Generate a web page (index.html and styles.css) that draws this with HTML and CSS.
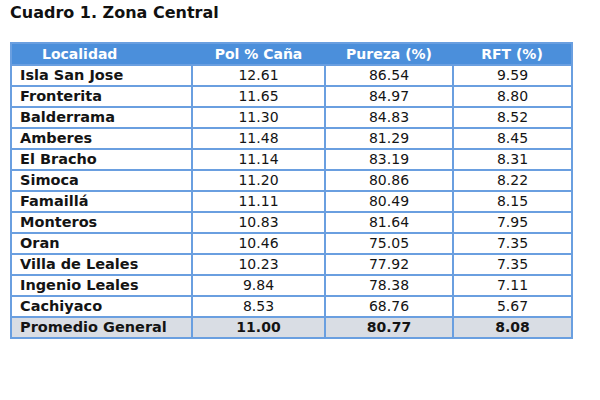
FILE: index.html
```html
<!DOCTYPE html>
<html lang="es">
<head>
<meta charset="utf-8">
<title>Cuadro 1. Zona Central</title>
<link rel="stylesheet" href="styles.css">
</head>
<body>
<div class="page">
  <h1 class="title">Cuadro 1. Zona Central</h1>
  <table class="data">
    <colgroup>
      <col class="c1"><col class="c2"><col class="c3"><col class="c4">
    </colgroup>
    <thead>
      <tr class="head">
        <th class="loc-head">Localidad</th>
        <th>Pol % Caña</th>
        <th>Pureza (%)</th>
        <th>RFT (%)</th>
      </tr>
    </thead>
    <tbody>
      <tr><td class="loc">Isla San Jose</td><td>12.61</td><td>86.54</td><td>9.59</td></tr>
      <tr><td class="loc">Fronterita</td><td>11.65</td><td>84.97</td><td>8.80</td></tr>
      <tr><td class="loc">Balderrama</td><td>11.30</td><td>84.83</td><td>8.52</td></tr>
      <tr><td class="loc">Amberes</td><td>11.48</td><td>81.29</td><td>8.45</td></tr>
      <tr><td class="loc">El Bracho</td><td>11.14</td><td>83.19</td><td>8.31</td></tr>
      <tr><td class="loc">Simoca</td><td>11.20</td><td>80.86</td><td>8.22</td></tr>
      <tr><td class="loc">Famaillá</td><td>11.11</td><td>80.49</td><td>8.15</td></tr>
      <tr><td class="loc">Monteros</td><td>10.83</td><td>81.64</td><td>7.95</td></tr>
      <tr><td class="loc">Oran</td><td>10.46</td><td>75.05</td><td>7.35</td></tr>
      <tr><td class="loc">Villa de Leales</td><td>10.23</td><td>77.92</td><td>7.35</td></tr>
      <tr><td class="loc">Ingenio Leales</td><td>9.84</td><td>78.38</td><td>7.11</td></tr>
      <tr><td class="loc">Cachiyaco</td><td>8.53</td><td>68.76</td><td>5.67</td></tr>
      <tr class="total"><td class="loc">Promedio General</td><td>11.00</td><td>80.77</td><td>8.08</td></tr>
    </tbody>
  </table>
</div>
</body>
</html>
```
FILE: styles.css
```css
html, body {
  margin: 0;
  padding: 0;
  background: #ffffff;
}
.page {
  padding: 4px 10px 0 10px;
  font-family: "DejaVu Sans", Verdana, sans-serif;
  color: #141414;
}
.title {
  margin: 0 0 20px 0;
  font-size: 16px;
  font-weight: bold;
  line-height: 18px;
  color: #111;
}
.data {
  border-collapse: collapse;
  width: 561px;
  table-layout: fixed;
  font-size: 14px;
  border: 2px solid #6a9fe0;
}
.c1 { width: 181px; }
.c2 { width: 133px; }
.c3 { width: 128px; }
.c4 { width: 119px; }
.head {
  background: #4b8fdb;
  height: 22px;
}
.head th {
  color: #ffffff;
  font-weight: bold;
  text-align: center;
  padding: 0;
  border: none;
  border-bottom: 2px solid #6a9fe0;
}
.head .loc-head {
  text-align: left;
  padding-left: 30px;
}
.data td {
  height: 19px;
  padding: 0;
  text-align: center;
  border: 2px solid #6a9fe0;
  line-height: 19px;
}
.data td.loc {
  text-align: left;
  font-weight: bold;
  font-size: 14.5px;
  padding-left: 8px;
}
.total td {
  background: #d9dde4;
  font-weight: bold;
}
```
